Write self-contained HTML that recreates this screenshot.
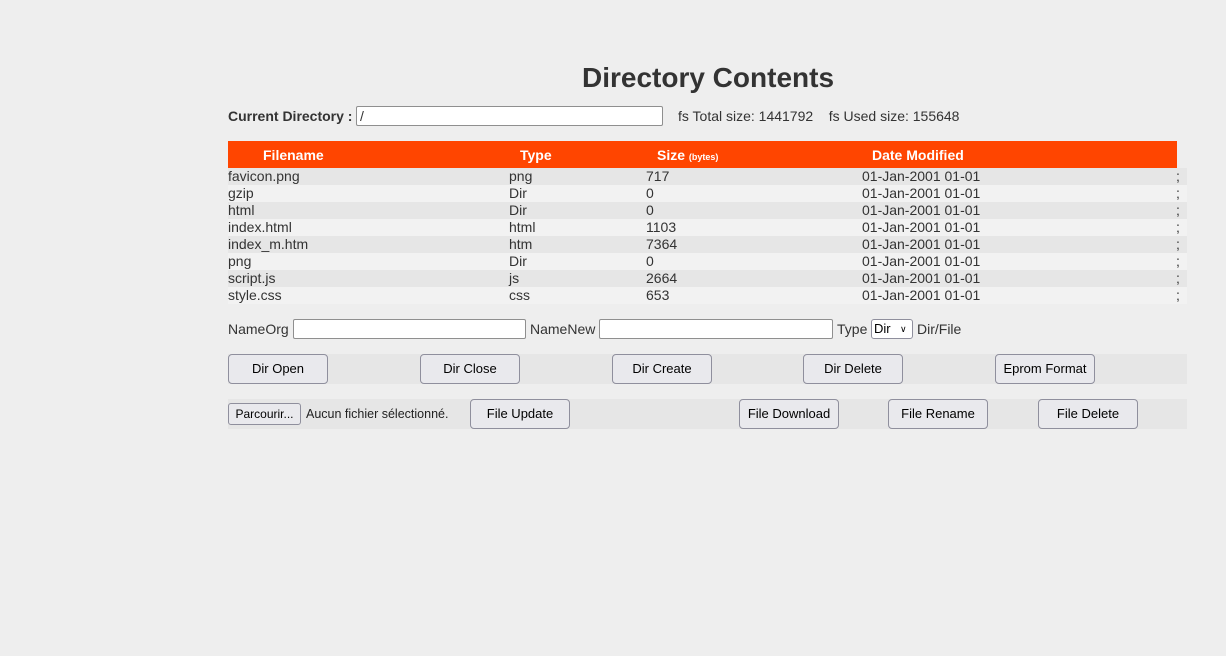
<!DOCTYPE html>
<html><head><meta charset="utf-8"><style>
*{box-sizing:border-box;margin:0;padding:0}
body{width:1226px;height:656px;background:#eeeeee;font-family:"Liberation Sans",Arial,sans-serif;color:#333;position:relative;overflow:hidden;font-size:14px}
.a{position:absolute;white-space:nowrap}
h1{position:absolute;left:0;width:1416px;text-align:center;top:62px;font-size:28px;font-weight:bold;color:#333}
.in{position:absolute;background:#fff;border:1px solid #8f8f8f;border-radius:2px;height:20px;font-size:14px;padding-left:3px;line-height:18px}
.hd{position:absolute;left:228px;top:141px;width:949px;height:27px;background:#ff4500;color:#fff;font-weight:bold;font-size:14px}
.hd span{position:absolute;top:6px}
.row{position:absolute;left:228px;width:959px;height:17px;font-size:14px;line-height:17px}
.row span{position:absolute;top:0}
.band{position:absolute;left:228px;width:959px;height:30px;background:#e6e6e6}
.btn{position:absolute;height:30px;width:100px;background:#e9e9ed;border:1px solid #8f8f9d;border-radius:4px;font-size:13px;color:#000;text-align:center;line-height:28px;font-family:"Liberation Sans",sans-serif}
</style></head><body>
<h1>Directory Contents</h1>
<div class="a" style="left:228px;top:108px;font-weight:bold;font-size:14px">Current Directory :</div>
<div class="in" style="left:356px;top:106px;width:307px">/</div>
<div class="a" style="left:678px;top:108px">fs Total size: 1441792&nbsp;&nbsp;&nbsp; fs Used size: 155648</div>
<div class="hd"><span style="left:35px">Filename</span><span style="left:292px">Type</span><span style="left:429px">Size <small style="font-size:9px">(bytes)</small></span><span style="left:644px">Date Modified</span></div>
<div class="row" style="top:168px;background:#e6e6e6"><span style="left:0">favicon.png</span><span style="left:281px">png</span><span style="left:418px">717</span><span style="left:634px">01-Jan-2001 01-01</span><span style="left:948px">;</span></div>
<div class="row" style="top:185px;background:#f2f2f2"><span style="left:0">gzip</span><span style="left:281px">Dir</span><span style="left:418px">0</span><span style="left:634px">01-Jan-2001 01-01</span><span style="left:948px">;</span></div>
<div class="row" style="top:202px;background:#e6e6e6"><span style="left:0">html</span><span style="left:281px">Dir</span><span style="left:418px">0</span><span style="left:634px">01-Jan-2001 01-01</span><span style="left:948px">;</span></div>
<div class="row" style="top:219px;background:#f2f2f2"><span style="left:0">index.html</span><span style="left:281px">html</span><span style="left:418px">1103</span><span style="left:634px">01-Jan-2001 01-01</span><span style="left:948px">;</span></div>
<div class="row" style="top:236px;background:#e6e6e6"><span style="left:0">index_m.htm</span><span style="left:281px">htm</span><span style="left:418px">7364</span><span style="left:634px">01-Jan-2001 01-01</span><span style="left:948px">;</span></div>
<div class="row" style="top:253px;background:#f2f2f2"><span style="left:0">png</span><span style="left:281px">Dir</span><span style="left:418px">0</span><span style="left:634px">01-Jan-2001 01-01</span><span style="left:948px">;</span></div>
<div class="row" style="top:270px;background:#e6e6e6"><span style="left:0">script.js</span><span style="left:281px">js</span><span style="left:418px">2664</span><span style="left:634px">01-Jan-2001 01-01</span><span style="left:948px">;</span></div>
<div class="row" style="top:287px;background:#f2f2f2"><span style="left:0">style.css</span><span style="left:281px">css</span><span style="left:418px">653</span><span style="left:634px">01-Jan-2001 01-01</span><span style="left:948px">;</span></div>

<div class="a" style="left:228px;top:321px">NameOrg</div>
<div class="in" style="left:293px;top:319px;width:233px"></div>
<div class="a" style="left:530px;top:321px">NameNew</div>
<div class="in" style="left:599px;top:319px;width:234px"></div>
<div class="a" style="left:837px;top:321px">Type</div>
<div class="a" style="left:871px;top:319px;width:42px;height:20px;border:1px solid #8f8f9d;border-radius:3px;background:#fff;font-size:13px;color:#000;padding-left:2px;line-height:18px">Dir <span style="position:absolute;left:28px;top:0;font-size:9px">&#x2228;</span></div>
<div class="a" style="left:917px;top:321px">Dir/File</div>

<div class="band" style="top:354px"></div>
<div class="btn" style="left:228px;top:354px">Dir Open</div>
<div class="btn" style="left:420px;top:354px">Dir Close</div>
<div class="btn" style="left:612px;top:354px">Dir Create</div>
<div class="btn" style="left:803px;top:354px">Dir Delete</div>
<div class="btn" style="left:995px;top:354px">Eprom Format</div>

<div class="band" style="top:399px"></div>
<div class="btn" style="left:228px;top:403px;width:73px;height:22px;line-height:20px;border-radius:3px;font-size:12px">Parcourir...</div>
<div class="a" style="left:306px;top:407px;font-size:12.5px;color:#222">Aucun fichier sélectionné.</div>
<div class="btn" style="left:470px;top:399px">File Update</div>
<div class="btn" style="left:739px;top:399px">File Download</div>
<div class="btn" style="left:888px;top:399px">File Rename</div>
<div class="btn" style="left:1038px;top:399px">File Delete</div>
</body></html>
